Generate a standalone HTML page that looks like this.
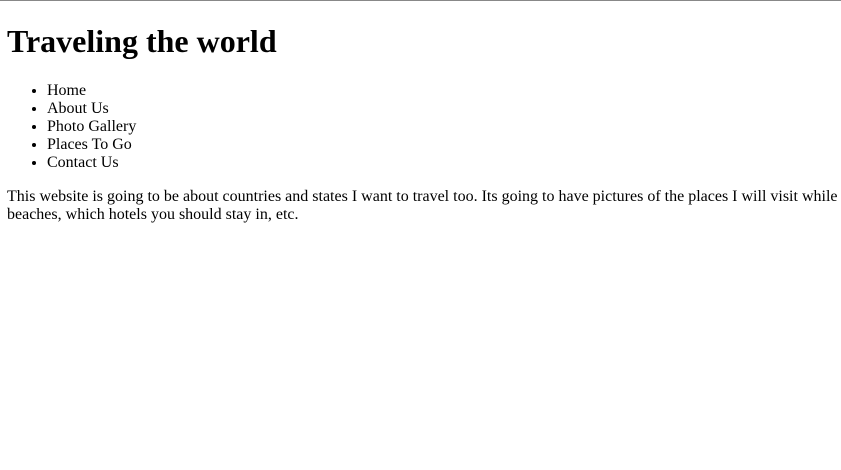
<!DOCTYPE html>
<html><head><meta charset="utf-8"><style>
html,body{margin:0;padding:0;overflow:hidden;background:#fff;}
body{border-top:1px solid #888;font-family:"Liberation Serif",serif;font-size:16px;color:#000;width:841px;height:469px;}
.w{margin:1px 0 8px 7px;width:834px;overflow:hidden;}
h1{font-size:32px;margin:21.44px 0;line-height:37px;}
ul{margin:16px 0;padding-left:40px;}
li{line-height:18px;}
p{margin:16px 0;white-space:nowrap;line-height:18px;overflow:hidden;}
</style></head><body><div class="w">
<h1>Traveling the world</h1>
<ul><li>Home</li><li>About Us</li><li>Photo Gallery</li><li>Places To Go</li><li>Contact Us</li></ul>
<p>This website is going to be about countries and states I want to travel too. Its going to have pictures of the places I will visit while there, the best<br>beaches, which hotels you should stay in, etc.</p>
</div></body></html>
